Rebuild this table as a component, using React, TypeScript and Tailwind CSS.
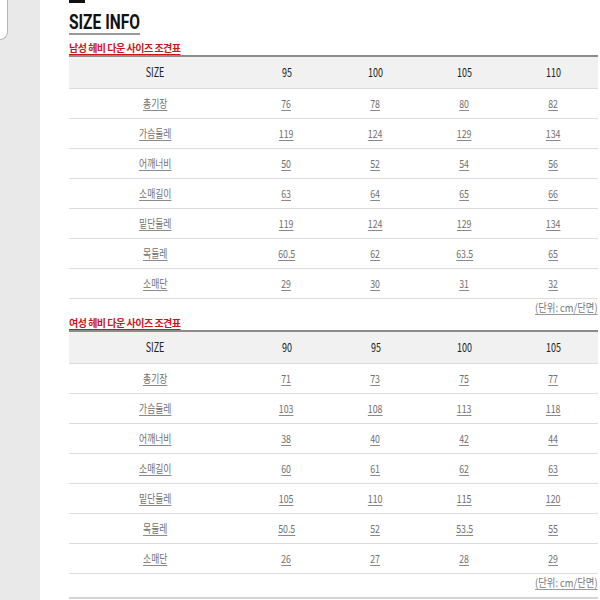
import React from "react";

const font = { fontFamily: '"Noto Sans CJK KR", "Noto Sans", sans-serif' };

type TableData = { title: string; sizes: string[]; rows: [string, string[]][] };

const men: TableData = {
  title: "남성 헤비 다운 사이즈 조견표",
  sizes: ["95", "100", "105", "110"],
  rows: [
    ["총기장", ["76", "78", "80", "82"]],
    ["가슴둘레", ["119", "124", "129", "134"]],
    ["어깨너비", ["50", "52", "54", "56"]],
    ["소매길이", ["63", "64", "65", "66"]],
    ["밑단둘레", ["119", "124", "129", "134"]],
    ["목둘레", ["60.5", "62", "63.5", "65"]],
    ["소매단", ["29", "30", "31", "32"]],
  ],
};

const women: TableData = {
  title: "여성 헤비 다운 사이즈 조견표",
  sizes: ["90", "95", "100", "105"],
  rows: [
    ["총기장", ["71", "73", "75", "77"]],
    ["가슴둘레", ["103", "108", "113", "118"]],
    ["어깨너비", ["38", "40", "42", "44"]],
    ["소매길이", ["60", "61", "62", "63"]],
    ["밑단둘레", ["105", "110", "115", "120"]],
    ["목둘레", ["50.5", "52", "53.5", "55"]],
    ["소매단", ["26", "27", "28", "29"]],
  ],
};

function Cell({ children }: { children: React.ReactNode }) {
  return (
    <div className="flex items-center justify-center">
      <span className="inline-block scale-x-[0.8] text-[11px] leading-none text-[#707070] underline decoration-[#8a8a8a] underline-offset-2">
        {children}
      </span>
    </div>
  );
}

function HeadCell({ children }: { children: React.ReactNode }) {
  return (
    <div className="flex items-center justify-center">
      <span className="inline-block scale-x-[0.72] text-[12.5px] leading-none text-[#222]">{children}</span>
    </div>
  );
}

function SizeTable({ data }: { data: TableData }) {
  return (
    <div>
      <div className="h-[14px] flex items-center">
        <span className="text-[10px] font-bold leading-none tracking-[-0.5px] text-[#c8161d] underline decoration-[#c8161d] underline-offset-[2px]">
          {data.title}
        </span>
      </div>
      <div className="border-t-2 border-[#8c8c8c]">
        <div className="grid grid-cols-[173px_89px_89px_89px_89px] h-[32px] bg-[#f1f1f1] border-b border-[#dcdcdc]">
          <HeadCell>SIZE</HeadCell>
          {data.sizes.map((s) => (
            <HeadCell key={s}>{s}</HeadCell>
          ))}
        </div>
        {data.rows.map(([label, vals]) => (
          <div key={label} className="grid grid-cols-[173px_89px_89px_89px_89px] h-[30px] border-b border-[#dcdcdc]">
            <Cell>{label}</Cell>
            {vals.map((v, i) => (
              <Cell key={i}>{v}</Cell>
            ))}
          </div>
        ))}
      </div>
      <div className="h-[17px] flex items-center justify-end">
        <span className="inline-block origin-right scale-x-[0.85] text-[11px] leading-none text-[#777] underline decoration-[#999] underline-offset-2">
          (단위: cm/단면)
        </span>
      </div>
    </div>
  );
}

export default function App() {
  return (
    <div className="flex w-[600px] h-[600px] overflow-hidden bg-white" style={font}>
      <div className="w-[40px] shrink-0 bg-[#e9e9e9]">
        <div className="w-[8px] h-[40px] bg-white border-r border-b border-[#b5b5b5] rounded-br-[8px]" />
      </div>
      <div className="flex-1 pl-[29px] pr-[2px]">
        <div className="w-[16px] h-[3px] bg-[#111]" />
        <div className="h-[29px] pt-[7px]">
          <span
            className="inline-block origin-left scale-x-[0.74] text-[21px] font-bold leading-[22px] text-[#111] border-b-2 border-[#999]"
            style={{ fontFamily: 'Roboto, "Noto Sans", sans-serif' }}
          >
            SIZE INFO
          </span>
        </div>
        <div className="pt-[9px]">
          <SizeTable data={men} />
        </div>
        <SizeTable data={women} />
        <div className="mt-[6px] border-t-2 border-[#d5d5d5]" />
      </div>
    </div>
  );
}
